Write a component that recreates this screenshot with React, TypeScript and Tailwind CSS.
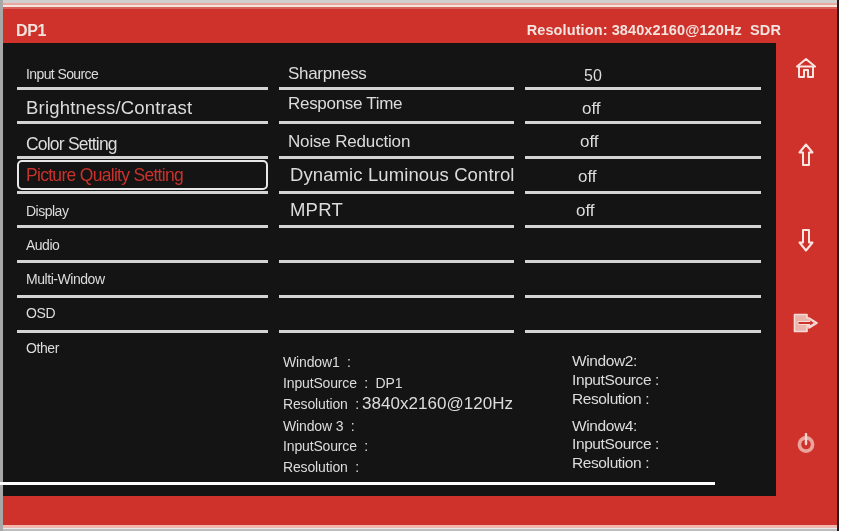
const font = "font-['Liberation_Sans',Arial,sans-serif]";

type Cell = { t?: string; cls?: string };

const left: Cell[] = [
  { t: "Input Source", cls: "text-[14px] tracking-[-0.6px] pb-[6px]" },
  { t: "Brightness/Contrast", cls: "text-[18.5px] tracking-[0.2px] pb-[4px]" },
  { t: "Color Setting", cls: "text-[17.5px] tracking-[-0.8px] pb-[3px]" },
  { t: "Picture Quality Setting", cls: "text-[17.5px] tracking-[-0.7px] text-[#c8322c] pb-[6px]" },
  { t: "Display", cls: "text-[14px] tracking-[-0.5px] pb-[7px]" },
  { t: "Audio", cls: "text-[14px] tracking-[-0.5px] pb-[8px]" },
  { t: "Multi-Window", cls: "text-[14px] tracking-[-0.45px] pb-[9px]" },
  { t: "OSD", cls: "text-[14px] tracking-[-0.4px] pb-[10px]" },
];

const mid: Cell[] = [
  { t: "Sharpness", cls: "text-[17px] tracking-[-0.3px] pl-[9px] pb-[5px]" },
  { t: "Response Time", cls: "text-[17px] tracking-[-0.3px] pl-[9px] pb-[9px]" },
  { t: "Noise Reduction", cls: "text-[17px] tracking-[-0.17px] pl-[9px] pb-[6px]" },
  { t: "Dynamic Luminous Control", cls: "text-[18.5px] tracking-[0.1px] pl-[11px] pb-[6px]" },
  { t: "MPRT", cls: "text-[18.5px] tracking-[0.2px] pl-[11px] pb-[6px]" },
  {},
  {},
  {},
];

const right: Cell[] = [
  { t: "50", cls: "text-[16px] pl-[59px] pb-[3px]" },
  { t: "off", cls: "text-[17px] pl-[57px] pb-[4px]" },
  { t: "off", cls: "text-[17px] pl-[55px] pb-[6px]" },
  { t: "off", cls: "text-[17px] pl-[53px] pb-[6px]" },
  { t: "off", cls: "text-[17px] pl-[51px] pb-[6px]" },
  {},
  {},
  {},
];

function Column({ cells, width, selected }: { cells: Cell[]; width: string; selected?: number }) {
  return (
    <div className={`flex flex-col ${width}`}>
      {cells.map((c, i) => (
        <div
          key={i}
          className="relative flex h-[34.7px] items-end whitespace-nowrap border-b-[3px] border-[#d4d4d4] leading-none"
        >
          {selected === i && (
            <div className="absolute inset-x-0 bottom-[1px] h-[30px] rounded-[5px] border-2 border-[#e8e8e8]" />
          )}
          <span className={`${c.cls ?? ""}`}>{c.t}</span>
        </div>
      ))}
    </div>
  );
}

function Home() {
  return (
    <svg width="22" height="22" viewBox="0 0 22 22" fill="none" stroke="#fbe6e2" strokeWidth="2">
      <path d="M11 2 L20 9.5 H18 V20 H13 V13 H9 V20 H4 V9.5 H2 Z" strokeLinejoin="round" />
      <path d="M5 9.5 H17" />
    </svg>
  );
}

function Up() {
  return (
    <svg width="16" height="24" viewBox="0 0 16 24" fill="none" stroke="#fbe6e2" strokeWidth="2">
      <path d="M8 1.5 L14.5 9.5 H11 V22 H5 V9.5 H1.5 Z" strokeLinejoin="round" />
    </svg>
  );
}

function Down() {
  return (
    <svg width="16" height="24" viewBox="0 0 16 24" fill="none" stroke="#fbe6e2" strokeWidth="2">
      <path d="M8 22.5 L14.5 14.5 H11 V2 H5 V14.5 H1.5 Z" strokeLinejoin="round" />
    </svg>
  );
}

function Enter() {
  return (
    <svg width="26" height="20" viewBox="0 0 26 20" fill="none">
      <path d="M1.5 1.5 H14 V5 H16 L24 10 L16 15 V13 H14 V18.5 H1.5 Z" fill="#eab4ac" stroke="#f7dcd8" strokeWidth="1.6" strokeLinejoin="round" />
      <path d="M5 8.5 H17 V6.5 L21.5 10 L17 13 V11.5 H5 Z" fill="#cf322a" stroke="#f7dcd8" strokeWidth="1" />
    </svg>
  );
}

function Power() {
  return (
    <svg width="18" height="20" viewBox="0 0 18 20" fill="none">
      <circle cx="9" cy="11.5" r="6.6" stroke="#e9a49b" strokeWidth="3.6" />
      <path d="M9 1 V11" stroke="#f5d5d0" strokeWidth="2.4" strokeLinecap="round" />
    </svg>
  );
}

function Lines({ rows, cls }: { rows: string[]; cls: string }) {
  return (
    <div className={`flex flex-col ${cls}`}>
      {rows.map((r, i) => (
        <div key={i} className="whitespace-nowrap">
          {r}
        </div>
      ))}
    </div>
  );
}

export default function App() {
  return (
    <div className={`${font} relative h-[531px] w-[844px] overflow-hidden bg-white`}>
      <div className="flex h-[531px] w-[839px] flex-col border-l-[3px] border-r-2 border-l-[#a8a8a8] border-r-[#2a1a18] bg-[#cf322a] blur-[0.45px]">
        <div className="h-[3px] bg-[#cfcfcf]" />
        <div className="h-[2px] bg-[#e8a8a0]" />
        <div className="h-[2px] bg-[#f4e4e0]" />
        <div className="h-[2px] bg-[#d8605a]" />
        <header className="flex h-[34px] items-start justify-between pl-[13px] pr-[56px] font-bold text-[#f3e4e0]">
          <span className="pt-[14px] text-[16px] leading-none tracking-[-0.4px]">DP1</span>
          <span className="pt-[14px] text-[14.5px] leading-none tracking-[0.1px]">Resolution: 3840x2160@120Hz&nbsp;&nbsp;SDR</span>
        </header>
        <div className="flex h-[453px]">
          <main className="flex h-full w-[773px] flex-col bg-[#141414] pl-[14px] pt-[12px] text-[#dcdcdc]">
            <div className="flex gap-[11px]">
              <div className="w-[251px]">
                <Column cells={left.map((c) => ({ ...c, cls: `pl-[9px] ${c.cls}` }))} width="w-[251px]" selected={3} />
                <div className="pl-[9px] pt-[8px] text-[14px] leading-none tracking-[-0.4px]">Other</div>
              </div>
              <div className="flex flex-col">
                <div className="flex gap-[11px]">
                  <Column cells={mid} width="w-[235px]" />
                  <Column cells={right} width="w-[236px]" />
                </div>
                <div className="flex pt-[21px] text-[14px] tracking-[-0.15px]">
                  <div className="w-[293px] pl-[4px]">
                    <Lines rows={["Window1\u00a0\u00a0:", "InputSource\u00a0\u00a0:\u00a0\u00a0DP1"]} cls="gap-[5px] leading-[16px]" />
                    <div className="mt-[5px] flex items-baseline gap-[3px] whitespace-nowrap leading-[16px]">
                      <span>Resolution&nbsp;&nbsp;:</span>
                      <span className="text-[17px] tracking-[0.05px]">3840x2160@120Hz</span>
                    </div>
                    <Lines rows={["Window 3\u00a0\u00a0:", "InputSource\u00a0\u00a0:", "Resolution\u00a0\u00a0:"]} cls="mt-[6px] gap-[4.5px] leading-[16px]" />
                  </div>
                  <div className="-mt-[1px] text-[15.5px] tracking-[-0.4px]">
                    <Lines rows={["Window2:", "InputSource :", "Resolution :"]} cls="gap-[3px] leading-[16px]" />
                    <Lines rows={["Window4:", "InputSource :", "Resolution :"]} cls="mt-[11px] gap-[2.5px] leading-[16px]" />
                  </div>
                </div>
              </div>
            </div>
          </main>
          <aside className="flex flex-1 flex-col items-center pr-[2px] pt-[14px]">
            <Home />
            <div className="mt-[64px]"><Up /></div>
            <div className="mt-[61px]"><Down /></div>
            <div className="mt-[61px]"><Enter /></div>
            <div className="mt-[100px]"><Power /></div>
          </aside>
        </div>
        <div className="flex-1" />
        <div className="h-[3px] bg-[#f0b8b0]" />
        <div className="h-[1px] bg-[#e8e8e8]" />
        <div className="h-[2px] bg-[#bdbdbd]" />
      </div>
      <div className="absolute left-0 top-[482px] h-[3px] w-[715px] bg-white" />
    </div>
  );
}
